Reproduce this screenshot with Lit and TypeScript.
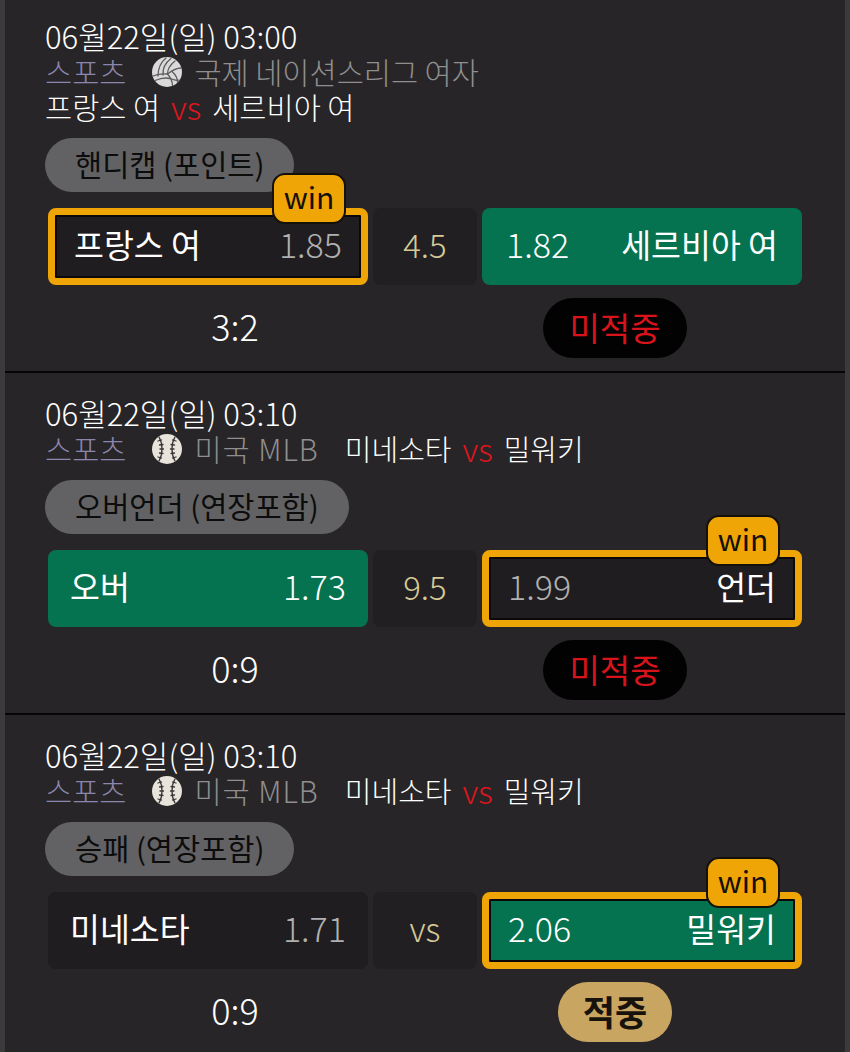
import { LitElement, html, css, svg } from 'lit';
import { customElement } from 'lit/decorators.js';

type Side = { name: string; odds: string; green?: boolean; win?: boolean };

type Game = {
    date: string;
    ball: 'volley' | 'base';
    league: string;
    home: string;
    away: string;
    inline: boolean;
    market: string;
    left: Side;
    mid: string;
    right: Side;
    score: string;
    hit: boolean;
};

const games: Game[] = [
    {
        date: '06월22일(일) 03:00',
        ball: 'volley',
        league: '국제 네이션스리그 여자',
        home: '프랑스 여',
        away: '세르비아 여',
        inline: false,
        market: '핸디캡 (포인트)',
        left: { name: '프랑스 여', odds: '1.85', win: true },
        mid: '4.5',
        right: { name: '세르비아 여', odds: '1.82', green: true },
        score: '3:2',
        hit: false,
    },
    {
        date: '06월22일(일) 03:10',
        ball: 'base',
        league: '미국 MLB',
        home: '미네소타',
        away: '밀워키',
        inline: true,
        market: '오버언더 (연장포함)',
        left: { name: '오버', odds: '1.73', green: true },
        mid: '9.5',
        right: { name: '언더', odds: '1.99', win: true },
        score: '0:9',
        hit: false,
    },
    {
        date: '06월22일(일) 03:10',
        ball: 'base',
        league: '미국 MLB',
        home: '미네소타',
        away: '밀워키',
        inline: true,
        market: '승패 (연장포함)',
        left: { name: '미네소타', odds: '1.71' },
        mid: 'vs',
        right: { name: '밀워키', odds: '2.06', green: true, win: true },
        score: '0:9',
        hit: true,
    },
];

const volleyball = svg`
    <circle cx="15" cy="15" r="15" fill="#dadada"/>
    <g fill="none" stroke="#5c5c5c" stroke-width="1.300" stroke-linecap="round">
        <path d="M14 1C9 5 6 11 6 19"/>
        <path d="M19 1.500C13 6 10.500 12 11 18"/>
        <path d="M23 4C18 8 15.500 13 15.500 17"/>
        <path d="M1 19C6 17 11 16.500 15.500 17C20 13.500 25 11 29 11"/>
        <path d="M3 23.500C9 21 14 20.500 18 21.500C22 23 25 24 27 23"/>
        <path d="M15.500 17C19 21 20.500 25 20.500 28.500"/>
        <path d="M20 14.500C24 18 25.500 22 25.500 25"/>
    </g>
`;

const baseball = svg`
    <circle cx="15" cy="15" r="15" fill="#e8e4dc"/>
    <g fill="none" stroke="#3a3636" stroke-width="1.300" stroke-linecap="round">
        <path d="M7 3C11 10 11 20 7 27"/>
        <path d="M23 3C19 10 19 20 23 27"/>
        <path d="M6 7l3.500-1M7.500 11l3.500-.5M8 15h3.500M7.500 19l3.500.5M6 23l3.500 1"/>
        <path d="M24 7l-3.500-1M22.500 11l-3.500-.5M22 15h-3.500M22.500 19l-3.500.5M24 23l-3.500 1"/>
    </g>
`;

@customElement('app-root')
export class AppRoot extends LitElement {
    static styles = css`
        :host {
            display: block;
            height: 1052px;
            overflow: hidden;
            background: #272527;
            border-left: 5px solid #3b3b3b;
            border-right: 5px solid #3b3b3b;
            font-family: 'Noto Sans CJK KR', 'Noto Sans', sans-serif;
            font-size: 29.500px;
            font-weight: 300;
            color: #fff;
        }

        .game {
            padding: 24px 40px 13px;
            border-bottom: 2px solid #060406;
        }

        .game:first-child {
            padding-top: 20px;
        }

        .game:last-child {
            border-bottom: 0;
        }

        .line {
            box-sizing: border-box;
            display: flex;
            align-items: center;
            height: 35px;
            line-height: 33px;
            padding-bottom: 2px;
            white-space: nowrap;
        }

        .line.inline {
            font-size: 29px;
        }

        .date {
            font-size: 31px;
            line-height: 31px;
            padding-bottom: 4px;
        }

        .sport {
            color: #8a86ad;
            font-size: 29.500px;
            margin-right: 26px;
        }

        .ball {
            width: 30px;
            height: 30px;
            margin-right: 12px;
            flex: none;
        }

        .league {
            color: #8f8f8f;
            font-size: 29.500px;
            margin-right: 31px;
        }

        .inline .league {
            letter-spacing: 1px;
            margin-right: 26px;
        }

        .vs {
            color: #e0161c;
            font-size: 32px;
            margin: 0 11px;
        }

        .market {
            display: inline-block;
            height: 54px;
            line-height: 51px;
            margin-top: 13px;
            padding: 0 30px;
            border-radius: 27px;
            background: #626264;
            color: #0c0c0c;
            font-weight: 400;
        }

        .bets {
            display: grid;
            grid-template-columns: 320px 104px 320px;
            gap: 5px;
            margin: 16px 3px 0;
        }

        .bet {
            position: relative;
            box-sizing: border-box;
            height: 77px;
            display: flex;
            align-items: center;
            justify-content: space-between;
            padding: 0 22px 6px;
            border-radius: 8px;
            background: #1f1d1f;
            font-size: 32.500px;
            font-weight: 400;
        }

        .bet.flip {
            padding: 0 24px 6px;
        }

        .bet.green {
            background: #05734f;
        }

        .bet.won {
            border: 7px solid #f0a506;
            box-shadow: inset 0 0 0 2px #0b080b;
            padding: 0 19px 6px;
        }

        .odds {
            color: #b0b0b0;
            font-size: 34px;
            font-weight: 300;
        }

        .green .odds {
            color: #fff;
        }

        .mid {
            box-sizing: border-box;
            display: flex;
            align-items: center;
            justify-content: center;
            height: 77px;
            padding-bottom: 6px;
            border-radius: 8px;
            background: #211f21;
            color: #d5ca98;
            font-size: 33px;
            font-weight: 300;
        }

        .badge {
            position: absolute;
            top: -42px;
            right: 15px;
            box-sizing: border-box;
            width: 74px;
            height: 51px;
            display: flex;
            align-items: center;
            justify-content: center;
            padding-bottom: 6px;
            border: 2px solid #14100a;
            border-radius: 13px;
            background: #f0a506;
            color: #14100a;
            font-size: 30px;
            font-weight: 400;
            line-height: 1;
        }

        .results {
            display: grid;
            grid-template-columns: 380px 380px;
            align-items: center;
            height: 60px;
            margin-top: 13px;
            text-align: center;
        }

        .score {
            font-size: 36px;
            line-height: 54px;
            padding-bottom: 6px;
        }

        .tag {
            display: inline-block;
            height: 60px;
            line-height: 58px;
            padding: 0 26px;
            border-radius: 30px;
            background: #030203;
            color: #d8141a;
            font-size: 33px;
            font-weight: 400;
            vertical-align: top;
        }

        .tag.hit {
            padding: 0 24.500px;
            background: #c8a662;
            color: #17130c;
            font-size: 35px;
            font-weight: 700;
        }
    `;

    renderBet(side: Side, flip: boolean) {
        const name = html`<span>${side.name}</span>`;
        const odds = html`<span class="odds">${side.odds}</span>`;
        return html`
            <div class="bet ${flip ? 'flip' : ''} ${side.green ? 'green' : ''} ${side.win ? 'won' : ''}">
                ${flip ? html`${odds}${name}` : html`${name}${odds}`}
                ${side.win ? html`<div class="badge">win</div>` : ''}
            </div>
        `;
    }

    renderGame(game: Game) {
        const teams = html`<span>${game.home}</span><span class="vs">vs</span><span>${game.away}</span>`;
        return html`
            <section class="game">
                <div class="line date">${game.date}</div>
                <div class="line ${game.inline ? 'inline' : ''}">
                    <span class="sport">스포츠</span>
                    <svg class="ball" viewBox="0 0 30 30">${game.ball === 'volley' ? volleyball : baseball}</svg>
                    <span class="league">${game.league}</span>
                    ${game.inline ? teams : ''}
                </div>
                ${game.inline ? '' : html`<div class="line">${teams}</div>`}
                <div class="market">${game.market}</div>
                <div class="bets">
                    ${this.renderBet(game.left, false)}
                    <div class="mid">${game.mid}</div>
                    ${this.renderBet(game.right, true)}
                </div>
                <div class="results">
                    <div class="score">${game.score}</div>
                    <div><span class="tag ${game.hit ? 'hit' : ''}">${game.hit ? '적중' : '미적중'}</span></div>
                </div>
            </section>
        `;
    }

    render() {
        return html`${games.map((game) => this.renderGame(game))}`;
    }
}
